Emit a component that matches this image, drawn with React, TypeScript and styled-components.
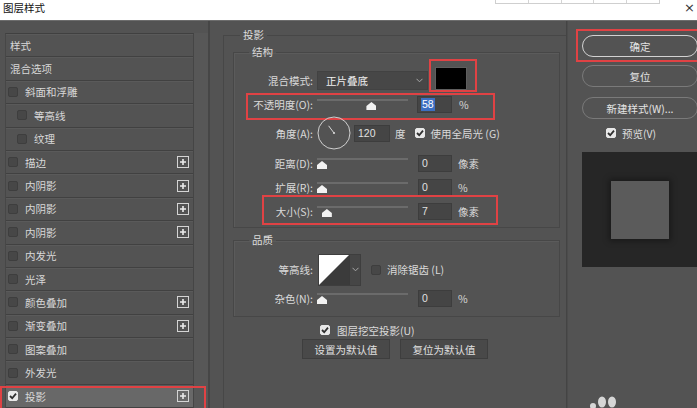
import React from "react";
import styled, { createGlobalStyle } from "styled-components";

const FONT = `"Noto Sans CJK SC", "Noto Sans", "DejaVu Sans", sans-serif`;

const Global = createGlobalStyle`
  html, body { margin: 0; padding: 0; background: #535353; }
  * { box-sizing: border-box; }
`;

const Window = styled.div`
  width: 697px;
  height: 408px;
  overflow: hidden;
  display: flex;
  flex-direction: column;
  background: #535353;
  font-family: ${FONT};
  font-size: 11px;
  color: #dadada;
  position: relative;
`;

/* ---------- title bar ---------- */
const TitleBar = styled.div`
  height: 21px;
  flex: none;
  background: #fff;
  border-bottom: 1px solid #6d6d6d;
  display: flex;
  align-items: flex-start;
`;
const Title = styled.div`
  color: #111;
  font-size: 10.5px;
  line-height: 16px;
  padding-left: 3px;
`;
const TopCells = styled.div`
  margin-left: auto;
  width: 165px;
  height: 4px;
  display: flex;
  border: 1px solid #cfcfcf;
  border-top: none;
`;
const TopCell = styled.div`
  flex: 1;
  & + & { border-left: 1px solid #d4d4d4; }
`;
const Close = styled.div`
  width: 37px;
  text-align: right;
  padding-right: 2px;
  color: #333;
  font-size: 13px;
  line-height: 16px;
  font-family: "DejaVu Sans", sans-serif;
`;

/* ---------- main ---------- */
const Main = styled.div`
  flex: 1;
  display: flex;
  min-height: 0;
`;

/* left */
const LeftPanel = styled.div`
  width: 210px;
  flex: none;
  display: flex;
  padding: 12px 0 0 5px;
  border-right: 2px solid #464646;
`;
const List = styled.div`
  width: 189px;
  flex: none;
  border-top: 1px solid #404040;
  border-left: 1px solid #474747;
  border-right: 1px solid #454545;
`;
const Strip = styled.div`
  flex: 1;
  background: #575757;
`;
const Row = styled.div<{ $pad: number; $selected?: boolean; $marked?: boolean }>`
  height: 23.4px;
  display: flex;
  align-items: center;
  gap: 7px;
  padding-left: ${(p) => p.$pad}px;
  border-bottom: 1px solid #414141;
  box-shadow: inset 0 1px 0 #5a5a5a;
  background: ${(p) => (p.$selected ? "#686868" : "transparent")};
  color: #d8d8d8;
  font-size: 10.5px;
  position: relative;
  &::after {
    content: "";
    display: ${(p) => (p.$marked ? "block" : "none")};
    position: absolute;
    top: 1px;
    left: -6px;
    right: -13px;
    bottom: -6px;
    border: 2px solid #e04244;
    pointer-events: none;
  }
`;
const PlusWrap = styled.span`
  margin-left: auto;
  margin-right: 4px;
  width: 12px;
  height: 12px;
  display: flex;
`;

const Box = styled.span<{ $checked?: boolean }>`
  width: 10px;
  height: 10px;
  flex: none;
  border-radius: 2px;
  background: ${(p) => (p.$checked ? "#e8e8e8" : "#474747")};
  border: 1px solid ${(p) => (p.$checked ? "#e8e8e8" : "#3e3e3e")};
  display: flex;
  align-items: center;
  justify-content: center;
`;

const Check = ({ checked }: { checked?: boolean }) => (
  <Box $checked={checked}>
    {checked && (
      <svg width="8" height="8" viewBox="0 0 8 8">
        <path d="M1 4 L3.2 6.2 L7 1.6" fill="none" stroke="#2e2e2e" strokeWidth="1.8" />
      </svg>
    )}
  </Box>
);

const Plus = () => (
  <PlusWrap>
    <svg width="12" height="12" viewBox="0 0 12 12">
      <rect x="0.5" y="0.5" width="11" height="11" fill="none" stroke="#d4d4d4" />
      <path d="M3 6 H9 M6 3 V9" stroke="#ececec" strokeWidth="1.6" />
    </svg>
  </PlusWrap>
);

/* middle */
const Middle = styled.div`
  width: 357px;
  flex: none;
  padding-left: 13px;
  border-right: 1px solid #444;
  display: flex;
  flex-direction: column;
`;
const OuterSet = styled.fieldset`
  margin: 7px 0 0 0;
  padding: 0;
  border: 1px solid #474747;
  border-right: none;
  border-bottom: none;
  min-width: 0;
  flex: 1;
  display: block;
`;
const Legend = styled.legend<{ $ml: number }>`
  font-size: 10.5px;
  line-height: 14px;
  padding: 0 3px;
  margin-left: ${(p) => p.$ml}px;
  color: #dcdcdc;
`;
const InnerSet = styled.fieldset<{ $mt: number }>`
  margin: ${(p) => p.$mt}px 6px 0 9px;
  padding: 0;
  border: 1px solid #474747;
  box-shadow: inset 1px 1px 0 #5b5b5b;
  min-width: 0;
`;
const Rows = styled.div<{ $pt: number; $pb: number }>`
  padding-top: ${(p) => p.$pt}px;
  padding-bottom: ${(p) => p.$pb}px;
`;
const FRow = styled.div<{ $h: number }>`
  height: ${(p) => p.$h}px;
  display: flex;
  align-items: center;
  position: relative;
`;
const Marker = styled.div<{ $t: number; $r: number; $b: number; $l: number }>`
  position: absolute;
  top: ${(p) => p.$t}px;
  right: ${(p) => p.$r}px;
  bottom: ${(p) => p.$b}px;
  left: ${(p) => p.$l}px;
  border: 2px solid #e04244;
  pointer-events: none;
`;
const Label = styled.span`
  width: 79px;
  flex: none;
  text-align: right;
  color: #dadada;
  font-size: 10.5px;
  white-space: nowrap;
`;
const Select = styled.div`
  margin-left: 4px;
  width: 111px;
  height: 19px;
  background: #474747;
  border: 1px solid #424242;
  display: flex;
  align-items: center;
  justify-content: space-between;
  padding: 0 4px 0 8px;
  color: #f0f0f0;
  font-size: 10.5px;
`;
const Swatch = styled.div`
  margin-left: 7px;
  width: 32px;
  height: 23px;
  background: #000;
  border: 1px solid #5e5e5e;
  align-self: flex-start;
  margin-top: 0px;
  position: relative;
`;
const Slider = styled.div`
  margin-left: 4px;
  width: 91px;
  height: 14px;
  position: relative;
  &::before {
    content: "";
    position: absolute;
    left: 0;
    right: 0;
    top: 2px;
    height: 2px;
    background: #6b6b6b;
  }
`;
const Thumb = styled.span`
  position: absolute;
  top: 5px;
  width: 10px;
  height: 8px;
  background: #f2f2f2;
  clip-path: polygon(50% 0, 100% 50%, 100% 100%, 0 100%, 0 50%);
`;
const NumBox = styled.div<{ $ml: number; $w: number }>`
  margin-left: ${(p) => p.$ml}px;
  width: ${(p) => p.$w}px;
  height: 17px;
  background: #454545;
  border: 1px solid #3d3d3d;
  padding-left: 3px;
  display: flex;
  align-items: center;
  color: #e0e0e0;
  font-size: 10.5px;
  font-family: "Liberation Sans", ${FONT};
`;
const Selected = styled.span`
  background: #3c6fc2;
  color: #fff;
  padding: 0 1px;
  line-height: 13px;
`;
const Unit = styled.span<{ $ml: number }>`
  margin-left: ${(p) => p.$ml}px;
  color: #dadada;
  font-size: 10.5px;
`;
const Dial = styled.span`
  margin-left: 4px;
  width: 34px;
  height: 34px;
  display: flex;
`;
const Contour = styled.div`
  margin-left: 5px;
  display: flex;
  height: 32px;
  border: 1px solid #3e3e3e;
`;
const ContourDrop = styled.span`
  width: 11px;
  background: #464646;
  display: flex;
  align-items: center;
  justify-content: center;
  border-left: 1px solid #3a3a3a;
`;
const Inline = styled.span<{ $ml: number }>`
  margin-left: ${(p) => p.$ml}px;
  display: flex;
  align-items: center;
  gap: 6px;
  color: #dadada;
  font-size: 10.5px;
`;
const KnockRow = styled.div`
  margin-top: 6px;
  height: 14px;
  display: flex;
  align-items: center;
  gap: 7px;
  padding-left: 96px;
  color: #dadada;
  font-size: 10.5px;
`;
const BtnRow = styled.div`
  margin-top: 2px;
  display: flex;
  gap: 10px;
  padding-left: 78px;
`;
const FlatBtn = styled.div`
  width: 88px;
  height: 20px;
  background: #494949;
  border: 1px solid #3e3e3e;
  color: #e0e0e0;
  font-size: 10.5px;
  display: flex;
  align-items: center;
  justify-content: center;
`;

/* right */
const Right = styled.div`
  flex: 1;
  padding: 14px 0 0 14px;
  border-left: 1px solid #4c4c4c;
  display: flex;
  flex-direction: column;
  position: relative;
`;
const Pill = styled.div<{ $primary?: boolean; $mt: number; $h: number }>`
  margin-top: ${(p) => p.$mt}px;
  width: 116px;
  height: ${(p) => p.$h}px;
  flex: none;
  border-radius: 11px;
  border: ${(p) => (p.$primary ? "1.5px solid #d2d2d2" : "1px solid #7a7a7a")};
  color: #e4e4e4;
  font-size: 10.5px;
  display: flex;
  align-items: center;
  justify-content: center;
  position: relative;
  white-space: nowrap;
`;
const PreviewRow = styled.div`
  margin-top: 8px;
  height: 12px;
  display: flex;
  align-items: center;
  gap: 6px;
  padding-left: 24px;
  color: #dedede;
  font-size: 10.5px;
`;
const Preview = styled.div`
  margin-top: 13px;
  width: 116px;
  height: 115px;
  flex: none;
  background: #262626;
  display: flex;
  align-items: center;
  justify-content: center;
`;
const PreviewSquare = styled.div`
  width: 58px;
  height: 58px;
  background: #5b5b5b;
  box-shadow: 0 0 6px 2px rgba(0, 0, 0, 0.35);
`;
const Paw = styled.svg`
  position: absolute;
  left: 20px;
  bottom: 0;
`;

const Chevron = () => (
  <svg width="7" height="5" viewBox="0 0 7 5">
    <polyline points="0.5,0.8 3.5,3.8 6.5,0.8" fill="none" stroke="#a8a8a8" strokeWidth="1" />
  </svg>
);

type Item = { text: string; pad: number; check?: boolean; checked?: boolean; plus?: boolean; selected?: boolean };
const items: Item[] = [
  { text: "样式", pad: 4 },
  { text: "混合选项", pad: 4 },
  { text: "斜面和浮雕", pad: 2, check: true },
  { text: "等高线", pad: 11, check: true },
  { text: "纹理", pad: 11, check: true },
  { text: "描边", pad: 2, check: true, plus: true },
  { text: "内阴影", pad: 2, check: true, plus: true },
  { text: "内阴影", pad: 2, check: true, plus: true },
  { text: "内阴影", pad: 2, check: true, plus: true },
  { text: "内发光", pad: 2, check: true },
  { text: "光泽", pad: 2, check: true },
  { text: "颜色叠加", pad: 2, check: true, plus: true },
  { text: "渐变叠加", pad: 2, check: true, plus: true },
  { text: "图案叠加", pad: 2, check: true },
  { text: "外发光", pad: 2, check: true },
  { text: "投影", pad: 2, check: true, checked: true, plus: true, selected: true },
];

const SliderCtl = ({ pct }: { pct: number }) => (
  <Slider>
    <Thumb style={{ left: `${(pct / 100) * 81}px` }} />
  </Slider>
);

export default function App() {
  return (
    <Window>
      <Global />
      <TitleBar>
        <Title>图层样式</Title>
        <TopCells>
          <TopCell />
          <TopCell />
          <TopCell />
          <TopCell />
          <TopCell />
        </TopCells>
        <Close>×</Close>
      </TitleBar>
      <Main>
        <LeftPanel>
          <List>
            {items.map((it, i) => (
              <Row key={i} $pad={it.pad} $selected={it.selected} $marked={it.selected}>
                {it.check && <Check checked={it.checked} />}
                <span>{it.text}</span>
                {it.plus && <Plus />}
              </Row>
            ))}
          </List>
          <Strip />
        </LeftPanel>

        <Middle>
          <OuterSet>
            <Legend $ml={16}>投影</Legend>
            <InnerSet $mt={3}>
              <Legend $ml={15}>结构</Legend>
              <Rows $pt={8} $pb={4}>
                <FRow $h={26}>
                  <Label>混合模式:</Label>
                  <Select>
                    <span>正片叠底</span>
                    <Chevron />
                  </Select>
                  <Swatch>
                    <Marker $t={-9} $r={-11} $b={-3} $l={-7} />
                  </Swatch>
                </FRow>
                <FRow $h={22}>
                  <Marker $t={0} $r={64} $b={-5} $l={12} />
                  <Label>不透明度(O):</Label>
                  <SliderCtl pct={61} />
                  <NumBox $ml={9} $w={35}>
                    <Selected>58</Selected>
                  </NumBox>
                  <Unit $ml={7}>%</Unit>
                </FRow>
                <FRow $h={36}>
                  <Label>角度(A):</Label>
                  <Dial>
                    <svg width="34" height="34" viewBox="0 0 34 34">
                      <circle cx="17" cy="17" r="16" fill="none" stroke="#cfcfcf" strokeWidth="1" />
                      <line x1="17" y1="17" x2="11.6" y2="9.8" stroke="#d8d8d8" strokeWidth="1" />
                      <circle cx="17" cy="17" r="1.1" fill="#d8d8d8" />
                    </svg>
                  </Dial>
                  <NumBox $ml={3} $w={36}>120</NumBox>
                  <Unit $ml={5}>度</Unit>
                  <Inline $ml={9}>
                    <Check checked />
                    <span>使用全局光 (G)</span>
                  </Inline>
                </FRow>
                <FRow $h={24}>
                  <Label>距离(D):</Label>
                  <SliderCtl pct={0} />
                  <NumBox $ml={10} $w={34}>0</NumBox>
                  <Unit $ml={6}>像素</Unit>
                </FRow>
                <FRow $h={24}>
                  <Label>扩展(R):</Label>
                  <SliderCtl pct={0} />
                  <NumBox $ml={10} $w={34}>0</NumBox>
                  <Unit $ml={6}>%</Unit>
                </FRow>
                <FRow $h={24}>
                  <Marker $t={-4} $r={61} $b={-2} $l={28} />
                  <Label>大小(S):</Label>
                  <SliderCtl pct={6} />
                  <NumBox $ml={10} $w={34}>7</NumBox>
                  <Unit $ml={6}>像素</Unit>
                </FRow>
              </Rows>
            </InnerSet>
            <InnerSet $mt={5}>
              <Legend $ml={15}>品质</Legend>
              <Rows $pt={6} $pb={6}>
                <FRow $h={33}>
                  <Label>等高线:</Label>
                  <Contour>
                    <svg width="30" height="30" viewBox="0 0 30 30">
                      <rect width="30" height="30" fill="#ffffff" />
                      <polygon points="0,30 30,0 30,30" fill="#3b3b3b" />
                    </svg>
                    <ContourDrop>
                      <Chevron />
                    </ContourDrop>
                  </Contour>
                  <Inline $ml={10}>
                    <Check />
                    <span>消除锯齿 (L)</span>
                  </Inline>
                </FRow>
                <FRow $h={24}>
                  <Label>杂色(N):</Label>
                  <SliderCtl pct={0} />
                  <NumBox $ml={10} $w={34}>0</NumBox>
                  <Unit $ml={6}>%</Unit>
                </FRow>
              </Rows>
            </InnerSet>
            <KnockRow>
              <Check checked />
              <span>图层挖空投影(U)</span>
            </KnockRow>
            <BtnRow>
              <FlatBtn>设置为默认值</FlatBtn>
              <FlatBtn>复位为默认值</FlatBtn>
            </BtnRow>
          </OuterSet>
        </Middle>

        <Right>
          <Pill $primary $mt={0} $h={22}>
            确定
            <Marker $t={-7} $r={-10} $b={-6} $l={-7} />
          </Pill>
          <Pill $mt={8} $h={22}>复位</Pill>
          <Pill $mt={10} $h={22}>新建样式(W)...</Pill>
          <PreviewRow>
            <Check checked />
            <span>预览(V)</span>
          </PreviewRow>
          <Preview>
            <PreviewSquare />
          </Preview>
          <Paw width="32" height="14" viewBox="0 0 32 14">
            <ellipse cx="5" cy="12" rx="3" ry="3" fill="#d6d6d6" />
            <ellipse cx="14" cy="8" rx="4" ry="5.5" fill="#d6d6d6" />
            <ellipse cx="24" cy="8" rx="4" ry="5.5" fill="#d6d6d6" />
          </Paw>
        </Right>
      </Main>
    </Window>
  );
}
